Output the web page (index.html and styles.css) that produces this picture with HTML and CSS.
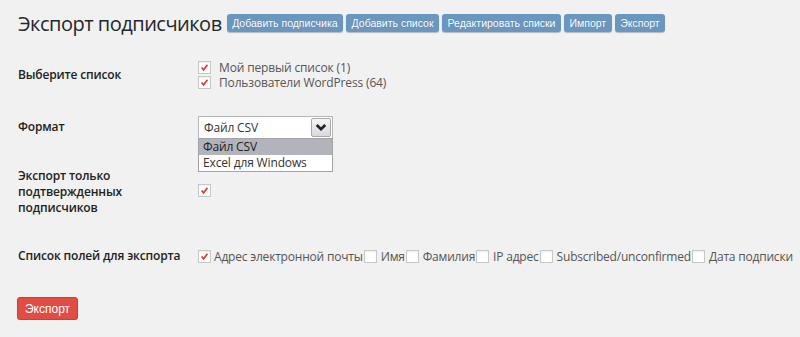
FILE: index.html
```html
<!DOCTYPE html>
<html lang="ru">
<head>
    <meta charset="UTF-8">
    <title>Экспорт подписчиков</title>
    <link rel="stylesheet" href="styles.css">
</head>
<body>
    <div class="wrap">
        <div class="page-head">
            <h1>Экспорт подписчиков</h1>
            <div class="head-actions">
                <a class="btn-blue" href="#">Добавить подписчика</a>
                <a class="btn-blue" href="#">Добавить список</a>
                <a class="btn-blue" href="#">Редактировать списки</a>
                <a class="btn-blue" href="#">Импорт</a>
                <a class="btn-blue" href="#">Экспорт</a>
            </div>
        </div>

        <form class="export-form">
            <div class="field field-lists">
                <div class="field-label">Выберите список</div>
                <div class="field-input stack">
                    <label class="check"><span class="box on"><svg viewBox="0 0 13 13"><path d="M3 6.5 L5.5 9.3 L10 3.2"/></svg></span>Мой первый список (1)</label>
                    <label class="check"><span class="box on"><svg viewBox="0 0 13 13"><path d="M3 6.5 L5.5 9.3 L10 3.2"/></svg></span>Пользователи WordPress (64)</label>
                </div>
            </div>

            <div class="field field-format">
                <div class="field-label">Формат</div>
                <div class="field-input">
                    <div class="select">
                        <span class="select-value">Файл CSV</span>
                        <span class="select-arrow"><svg viewBox="0 0 10 10"><path d="M2.5 3.5 L5 6 L7.5 3.5"/></svg></span>
                        <ul class="select-options">
                            <li class="active">Файл CSV</li>
                            <li>Excel для Windows</li>
                        </ul>
                    </div>
                </div>
            </div>

            <div class="field field-confirmed">
                <div class="field-label">Экспорт только<br>подтвержденных<br>подписчиков</div>
                <div class="field-input">
                    <span class="box on"><svg viewBox="0 0 13 13"><path d="M3 6.5 L5.5 9.3 L10 3.2"/></svg></span>
                </div>
            </div>

            <div class="field field-columns">
                <div class="field-label">Список полей для экспорта</div>
                <div class="field-input inline">
                    <label class="check"><span class="box on"><svg viewBox="0 0 13 13"><path d="M3 6.5 L5.5 9.3 L10 3.2"/></svg></span>Адрес электронной почты</label>
                    <label class="check"><span class="box"></span>Имя</label>
                    <label class="check"><span class="box"></span>Фамилия</label>
                    <label class="check"><span class="box"></span>IP адрес</label>
                    <label class="check"><span class="box"></span>Subscribed/unconfirmed</label>
                    <label class="check"><span class="box"></span>Дата подписки</label>
                </div>
            </div>

            <button type="button" class="btn-red">Экспорт</button>
        </form>
    </div>
</body>
</html>
```

FILE: styles.css
```css
body {
    margin: 0;
    background: #f1f1f1;
    font-family: "Open Sans", "Noto Sans", sans-serif;
    font-size: 12px;
    letter-spacing: -0.15px;
    color: #444;
}
.wrap { padding: 8px 0 0 18px; }

.page-head {
    display: flex;
    align-items: center;
    height: 30px;
}
.page-head h1 {
    margin: 0 5px 0 0;
    font-size: 20px;
    font-weight: 400;
    letter-spacing: -0.5px;
    color: #23282d;
}
.head-actions { display: flex; gap: 3px; }
.btn-blue {
    display: block;
    height: 18px;
    line-height: 18px;
    padding: 0 5.5px;
    background: #6a97c0;
    border-radius: 3px;
    box-shadow: 0 1px 1px rgba(0,0,0,0.25);
    color: #fff;
    font-family: "Liberation Sans", Arial, sans-serif;
    font-size: 10.5px;
    letter-spacing: 0;
    text-decoration: none;
    text-shadow: 0 0 1px rgba(0,0,0,0.2);
}

.export-form { margin-top: 12px; }
.field {
    display: grid;
    grid-template-columns: 180px 1fr;
    align-items: center;
}
.field-lists { height: 50px; }
.field-format { height: 54px; }
.field-confirmed { height: 76px; }
.field-columns { height: 52px; }
.field-label {
    font-weight: 600;
    color: #222;
    line-height: 16px;
}

.stack { display: flex; flex-direction: column; }
.inline { display: flex; white-space: nowrap; letter-spacing: -0.2px; }
.check {
    display: flex;
    align-items: center;
    line-height: 15px;
    color: #555;
}
.stack .check { gap: 8px; }
.inline .check { gap: 4px; margin-right: 1px; }
.inline .check:first-child { gap: 3px; }

.box {
    display: inline-block;
    box-sizing: border-box;
    width: 13px;
    height: 13px;
    border: 1px solid #c8c8c8;
    background: #fff;
    box-shadow: inset 0 1px 2px rgba(0,0,0,0.07);
    flex: none;
}
.box svg { display: block; width: 11px; height: 11px; }
.box svg path {
    fill: none;
    stroke: #dd3d36;
    stroke-width: 2;
}

.select {
    position: relative;
    box-sizing: border-box;
    width: 135px;
    height: 23px;
    border: 1px solid #b5b5b5;
    background: #fff;
    color: #333;
}
.select-value {
    display: block;
    line-height: 21px;
    padding-left: 5px;
}
.select-arrow {
    position: absolute;
    top: 1px;
    right: 1px;
    box-sizing: border-box;
    width: 20px;
    height: 19px;
    border: 1px solid #a9a9a9;
    border-radius: 2px;
    background: linear-gradient(#f6f6f8, #d8d8de);
}
.select-arrow svg { display: block; width: 18px; height: 17px; }
.select-arrow svg path {
    fill: none;
    stroke: #222;
    stroke-width: 1.6;
}
.select-options {
    position: absolute;
    top: 21px;
    left: -1px;
    width: 135px;
    box-sizing: border-box;
    margin: 0;
    padding: 0;
    list-style: none;
    border: 1px solid #a4a4a4;
    background: #fff;
    z-index: 2;
}
.select-options li {
    line-height: 16px;
    padding-left: 4px;
    color: #333;
}
.select-options li.active { background: #b3b3bb; color: #222; }

.btn-red {
    display: block;
    margin: 15px 0 0 -1px;
    width: 61px;
    height: 23px;
    padding: 0;
    border: 1px solid #d23c33;
    border-radius: 3px;
    background: #e14d43;
    box-shadow: 0 1px 1px rgba(0,0,0,0.15);
    color: #fff;
    font-family: "Liberation Sans", Arial, sans-serif;
    font-size: 12px;
}
```
